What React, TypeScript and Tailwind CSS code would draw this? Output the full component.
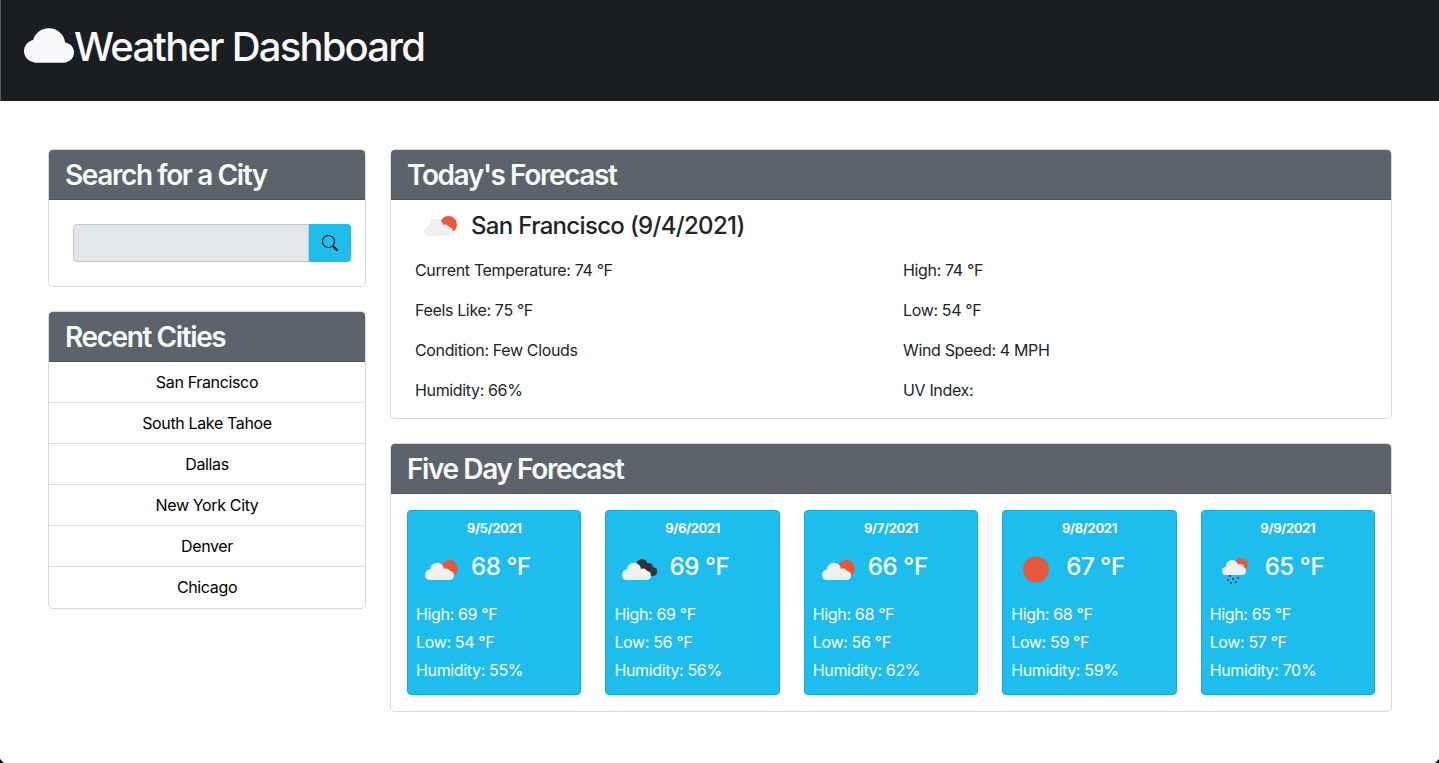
import { BsCloudFill, BsSearch } from "react-icons/bs";

const cities = ["San Francisco", "South Lake Tahoe", "Dallas", "New York City", "Denver", "Chicago"];

const today = [
  ["Current Temperature: 74 °F", "High: 74 °F"],
  ["Feels Like: 75 °F", "Low: 54 °F"],
  ["Condition: Few Clouds", "Wind Speed: 4 MPH"],
  ["Humidity: 66%", "UV Index:"],
];

type IconKind = "few" | "broken" | "clear" | "rain";

const days: { date: string; temp: string; high: string; low: string; humidity: string; icon: IconKind }[] = [
  { date: "9/5/2021", temp: "68", high: "69", low: "54", humidity: "55", icon: "few" },
  { date: "9/6/2021", temp: "69", high: "69", low: "56", humidity: "56", icon: "broken" },
  { date: "9/7/2021", temp: "66", high: "68", low: "56", humidity: "62", icon: "few" },
  { date: "9/8/2021", temp: "67", high: "68", low: "59", humidity: "59", icon: "clear" },
  { date: "9/9/2021", temp: "65", high: "65", low: "57", humidity: "70", icon: "rain" },
];

function Cloud() {
  return (
    <g fill="#f0f0f0">
      <rect x="9" y="29" width="29" height="9" rx="4.5" />
      <circle cx="21" cy="27.7" r="7" />
      <circle cx="30" cy="31" r="4.5" />
      <circle cx="14" cy="32" r="4.5" />
    </g>
  );
}

function WeatherIcon({ kind, className = "" }: { kind: IconKind; className?: string }) {
  return (
    <svg viewBox="0 0 50 50" className={`h-[50px] w-[50px] shrink-0 ${className}`}>
      {kind === "clear" && <circle cx="25" cy="27.5" r="13" fill="#e5583c" />}
      {kind === "few" && (
        <>
          <circle cx="33.5" cy="26.5" r="8.5" fill="#e5583c" />
          <Cloud />
        </>
      )}
      {kind === "broken" && (
        <>
          <g fill="#333333">
            <circle cx="28" cy="22.5" r="5.5" />
            <circle cx="34.5" cy="25.5" r="4.5" />
            <circle cx="38.7" cy="29.5" r="4.5" />
          </g>
          <g transform="translate(-1 0)">
            <Cloud />
          </g>
        </>
      )}
      {kind === "rain" && (
        <>
          <circle cx="31.5" cy="22.5" r="6.5" fill="#e5583c" />
          <g fill="#f0f0f0">
            <rect x="12" y="25" width="24" height="8" rx="4" />
            <circle cx="22" cy="24" r="6" />
            <circle cx="30" cy="26" r="4" />
          </g>
          <g fill="#2f4a5a">
            <rect x="19" y="33" width="2" height="2" />
            <rect x="22" y="36" width="2" height="2" />
            <rect x="17" y="37" width="2" height="2" />
            <rect x="27" y="35" width="2" height="2" />
            <rect x="20" y="40" width="2" height="2" />
            <rect x="25" y="39" width="2" height="2" />
          </g>
        </>
      )}
    </svg>
  );
}

function Card({ title, children }: { title: string; children: React.ReactNode }) {
  return (
    <div className="rounded-[5px] border border-[#d8d9da] bg-white">
      <div className="flex h-[50px] items-center rounded-t-[4px] border-b border-[#50565c] bg-[#5c636a] px-4 text-[28px] font-semibold tracking-[-0.05em] text-[#f8f9fa]">
        {title}
      </div>
      {children}
    </div>
  );
}

export default function App() {
  return (
    <div className="relative h-[763px] overflow-hidden bg-white font-['Inter',sans-serif] text-base tracking-[-0.022em] text-[#212529]">
      {/* Navbar */}
      <header className="flex h-[101px] items-center border-l border-[#555a5e] bg-[#1a1e21] pb-2 pl-[23px] text-[#f8f9fa]">
        <BsCloudFill className="h-[50px] w-[50px]" />
        <h1 className="text-[40px] font-medium leading-none tracking-[-0.045em]">Weather Dashboard</h1>
      </header>

      <main className="flex gap-6 pl-12 pr-[47px] pt-12">
        {/* Left column */}
        <div className="flex w-[318px] shrink-0 flex-col gap-6">
          <Card title="Search for a City">
            <div className="flex h-[86px] items-start pl-6 pr-[14px] pt-6">
              <input className="h-[38px] min-w-0 flex-1 rounded-l-[4px] border border-[#c5c9cf] bg-[#e3e6eb]" />
              <button className="flex h-[38px] w-[42px] items-center justify-center rounded-r-[4px] bg-[#1dbeee] text-black">
                <BsSearch className="h-4 w-4" />
              </button>
            </div>
          </Card>
          <Card title="Recent Cities">
            <ul>
              {cities.map((c, i) => (
                <li
                  key={c}
                  className={`flex h-[41px] items-center justify-center ${i < 5 ? "border-b border-[#dcdddd]" : "pb-px"} text-black`}
                >
                  {c}
                </li>
              ))}
            </ul>
          </Card>
        </div>

        {/* Right column */}
        <div className="flex min-w-0 flex-1 flex-col gap-6">
          <Card title="Today's Forecast">
            <div className="h-[218px]">
              <div className="flex h-[50px] items-center pl-[24px] pt-[2px]">
                <WeatherIcon kind="few" className="-mt-[7px]" />
                <h2 className="pl-[6px] text-2xl font-medium tracking-[-0.028em]">San Francisco (9/4/2021)</h2>
              </div>
              <div className="grid grid-cols-2 pl-6">
                {today.flat().map((t) => (
                  <div key={t} className="flex h-10 items-center">
                    {t}
                  </div>
                ))}
              </div>
            </div>
          </Card>
          <Card title="Five Day Forecast">
            <div className="flex gap-6 p-4">
              {days.map((d) => (
                <div
                  key={d.date}
                  className="h-[185px] flex-1 rounded-[4px] border border-[#1aa8d4] bg-[#1dbeee] pl-2 pt-[7px] text-white"
                >
                  <div className="pr-2 text-center text-[13px] font-bold leading-[20px]">{d.date}</div>
                  <div className="mt-[4px] flex items-center">
                    <WeatherIcon kind={d.icon} />
                    <span className="pl-[5px] text-2xl font-medium tracking-[-0.016em]">{d.temp} °F</span>
                  </div>
                  <div className="mt-[8px] leading-7">
                    <div>High: {d.high} °F</div>
                    <div>Low: {d.low} °F</div>
                    <div>Humidity: {d.humidity}%</div>
                  </div>
                </div>
              ))}
            </div>
          </Card>
        </div>
      </main>

      {/* window corners of the capture */}
      <div className="absolute -bottom-[4px] -left-[4px] h-[7px] w-[7px] rotate-45 bg-black" />
      <div className="absolute -bottom-[4px] -right-[4px] h-[7px] w-[7px] rotate-45 bg-black" />
    </div>
  );
}
